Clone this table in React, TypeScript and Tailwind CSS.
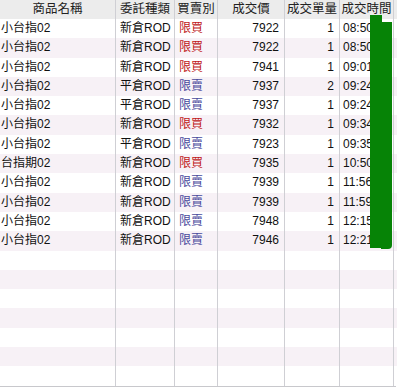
import React from "react";

type Trade = {
    name: string;
    kind: string;
    side: string;
    price: string;
    qty: string;
    time: string;
};

const trades: Trade[] = [
    { name: "小台指02", kind: "新倉ROD", side: "限買", price: "7922", qty: "1", time: "08:50" },
    { name: "小台指02", kind: "新倉ROD", side: "限買", price: "7922", qty: "1", time: "08:50" },
    { name: "小台指02", kind: "新倉ROD", side: "限買", price: "7941", qty: "1", time: "09:01" },
    { name: "小台指02", kind: "平倉ROD", side: "限賣", price: "7937", qty: "2", time: "09:24" },
    { name: "小台指02", kind: "平倉ROD", side: "限賣", price: "7937", qty: "1", time: "09:24" },
    { name: "小台指02", kind: "新倉ROD", side: "限買", price: "7932", qty: "1", time: "09:34" },
    { name: "小台指02", kind: "平倉ROD", side: "限賣", price: "7923", qty: "1", time: "09:35" },
    { name: "台指期02", kind: "新倉ROD", side: "限買", price: "7935", qty: "1", time: "10:50" },
    { name: "小台指02", kind: "新倉ROD", side: "限賣", price: "7939", qty: "1", time: "11:56" },
    { name: "小台指02", kind: "新倉ROD", side: "限賣", price: "7939", qty: "1", time: "11:59" },
    { name: "小台指02", kind: "新倉ROD", side: "限賣", price: "7948", qty: "1", time: "12:15" },
    { name: "小台指02", kind: "新倉ROD", side: "限賣", price: "7946", qty: "1", time: "12:21" },
];

const headers = ["商品名稱", "委託種類", "買賣別", "成交價", "成交單量", "成交時間"];

const cols = "grid grid-cols-[116px_59px_43px_67px_55px_54px]";
const cell = "border-r border-[#cfcfd4] overflow-hidden whitespace-nowrap";

export default function App() {
    const blanks = 19 - trades.length;

    return (
        <div
            className="relative w-[397px] h-[391px] bg-white text-[12px] text-[#111] overflow-hidden"
            style={{ fontFamily: '"Liberation Sans", "Noto Sans CJK TC", sans-serif' }}
        >
            <div className={`${cols} h-[19px] bg-[#ececec] text-[#222] text-[12.5px] leading-[19px]`}>
                {headers.map((h) => (
                    <div key={h} className={`${cell} text-center`}>{h}</div>
                ))}
            </div>

            {trades.map((t, i) => (
                <div
                    key={i}
                    className={`${cols} h-[19.3px] leading-[19px] ${i % 2 ? "bg-[#f7f1f6]" : "bg-white"}`}
                >
                    <div className={`${cell} pl-[1px]`}>{t.name}</div>
                    <div className={`${cell} pl-[4px]`}>{t.kind}</div>
                    <div className={`${cell} pl-[4px] ${t.side === "限買" ? "text-[#c01818]" : "text-[#4a4a9c]"}`}>
                        {t.side}
                    </div>
                    <div className={`${cell} text-right pr-[5px]`}>{t.price}</div>
                    <div className={`${cell} text-right pr-[5px]`}>{t.qty}</div>
                    <div className={`${cell} pl-[3px]`}>{t.time}</div>
                </div>
            ))}

            {Array.from({ length: blanks }).map((_, j) => {
                const i = trades.length + j;
                return (
                    <div
                        key={`b${i}`}
                        className={`${cols} h-[19.3px] ${i % 2 ? "bg-[#f7f1f6]" : "bg-white"}`}
                    >
                        {headers.map((h) => (
                            <div key={h} className={cell} />
                        ))}
                    </div>
                );
            })}
            <div className="h-px w-[396px] bg-[#c8c8cc]" />

            {/* green marker scribbled over the time column */}
            <div className="absolute left-[370px] top-[15px] w-[12px] h-[233px] bg-[#068306]" />
            <div className="absolute left-[381px] top-[22px] w-[11px] h-[227px] bg-[#068306] rounded-br-[4px]" />
        </div>
    );
}
